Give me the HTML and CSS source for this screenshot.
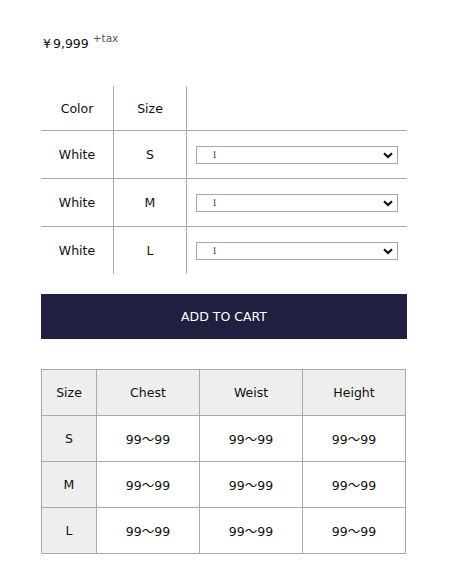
FILE: index.html
```html
<!DOCTYPE html>
<html lang="ja">
<head>
<meta charset="utf-8">
<title>Product</title>
<link rel="stylesheet" href="styles.css">
</head>
<body>
<main class="product">
  <p class="price"><span class="yen">¥</span>9,999<sup class="tax">+tax</sup></p>

  <table class="variants">
    <thead>
      <tr><th class="c-color">Color</th><th class="c-size">Size</th><th class="c-qty"></th></tr>
    </thead>
    <tbody>
      <tr><td>White</td><td>S</td><td class="qty-cell"><div class="select-wrap"><select class="qty"><option>1</option><option>2</option><option>3</option></select><svg class="chev" viewBox="0 0 10 7" width="10" height="7"><path d="M1 1.2 L5 5 L9 1.2" fill="none" stroke="#111" stroke-width="2.2"/></svg></div></td></tr>
      <tr><td>White</td><td>M</td><td class="qty-cell"><div class="select-wrap"><select class="qty"><option>1</option><option>2</option><option>3</option></select><svg class="chev" viewBox="0 0 10 7" width="10" height="7"><path d="M1 1.2 L5 5 L9 1.2" fill="none" stroke="#111" stroke-width="2.2"/></svg></div></td></tr>
      <tr><td>White</td><td>L</td><td class="qty-cell"><div class="select-wrap"><select class="qty"><option>1</option><option>2</option><option>3</option></select><svg class="chev" viewBox="0 0 10 7" width="10" height="7"><path d="M1 1.2 L5 5 L9 1.2" fill="none" stroke="#111" stroke-width="2.2"/></svg></div></td></tr>
    </tbody>
  </table>

  <button class="cart" type="button">ADD TO CART</button>

  <table class="sizes">
    <thead>
      <tr><th class="s-size">Size</th><th>Chest</th><th>Weist</th><th>Height</th></tr>
    </thead>
    <tbody>
      <tr><th>S</th><td>99～99</td><td>99～99</td><td>99～99</td></tr>
      <tr><th>M</th><td>99～99</td><td>99～99</td><td>99～99</td></tr>
      <tr><th>L</th><td>99～99</td><td>99～99</td><td>99～99</td></tr>
    </tbody>
  </table>
</main>
</body>
</html>
```

FILE: styles.css
```css
html, body {
  margin: 0;
  padding: 0;
  background: #fff;
}

body {
  font-family: "DejaVu Sans", "Noto Sans CJK JP", sans-serif;
  font-size: 12.5px;
  color: #111;
}

.product {
  width: 366px;
  padding: 33px 0 30px 41px;
}

.price {
  margin: 0;
  font-size: 12.5px;
  line-height: 22px;
}

.yen {
  margin-left: 2px;
  margin-right: 2px;
}

.tax {
  font-size: 10.5px;
  color: #555;
  margin-left: 4px;
  vertical-align: 6px;
  line-height: 0;
}

.variants {
  width: 366px;
  border-collapse: collapse;
  margin-top: 31px;
}

.variants th,
.variants td {
  font-weight: normal;
  text-align: center;
  padding: 0;
  border-right: 1px solid #aaa;
  border-bottom: 1px solid #aaa;
}

.variants th:last-child,
.variants td:last-child {
  border-right: none;
}

.variants tbody tr:last-child td {
  border-bottom: none;
}

.variants thead th {
  height: 44px;
}

.variants tbody td {
  height: 47px;
}

.c-color { width: 72px; }
.c-size { width: 72px; }

.qty-cell {
  padding: 0 9px 0 9px !important;
}

.select-wrap {
  position: relative;
  height: 18px;
}

.qty {
  appearance: none;
  -webkit-appearance: none;
  display: block;
  width: 100%;
  height: 18px;
  margin: 0;
  box-sizing: border-box;
  border: 1px solid #a9a9a9;
  border-radius: 0;
  background: #fff;
  padding: 0 0 0 15px;
  font-family: "Liberation Serif", serif;
  font-size: 10px;
  color: #5a2a18;
}

.chev {
  position: absolute;
  right: 5px;
  top: 6px;
  pointer-events: none;
}

.cart {
  display: block;
  width: 366px;
  height: 45px;
  margin-top: 20px;
  border: none;
  background: #1f1f3f;
  color: #fff;
  font-family: "DejaVu Sans", sans-serif;
  font-size: 12.5px;
  padding: 0;
}

.sizes {
  width: 365px;
  border-collapse: collapse;
  margin-top: 30px;
}

.sizes th,
.sizes td {
  font-weight: normal;
  text-align: center;
  border: 1px solid #aaa;
  padding: 0;
  height: 45px;
}

.sizes thead th,
.sizes tbody th {
  background: #eee;
}

.sizes td {
  background: #fff;
}

.s-size { width: 54px; }
```
